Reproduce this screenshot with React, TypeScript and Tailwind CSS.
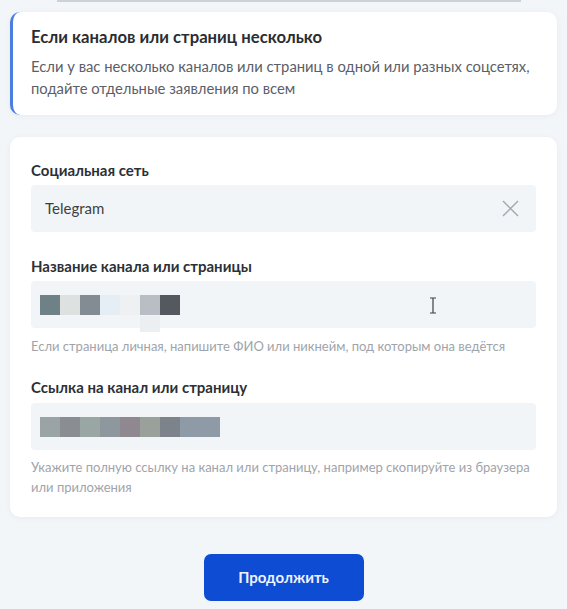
import React from "react";

const nameBlocks = ["#6e8187", "#dde2e0", "#838c93", "#e5eef5", "#eef0f1", "#b8bec4", "#54595f"];
const linkBlocks = ["#9aa4a5", "#8a8e93", "#9aa6a4", "#8e969e", "#8f8890", "#9aa19b", "#7d838b", "#8e9aa6", "#8e9aa6"];

const Label: React.FC<{ children: React.ReactNode }> = ({ children }) => (
  <p className="text-[15px] leading-[20px] font-bold text-[#2c3036]">{children}</p>
);

const Hint: React.FC<{ children: React.ReactNode }> = ({ children }) => (
  <p className="text-[13px] leading-[20px] text-[#a0a4aa]">{children}</p>
);

const App: React.FC = () => {
  return (
    <div className="min-h-[609px] bg-[#f3f6f9] px-[10px] font-['Lato','Noto_Sans',sans-serif]">
      <div className="ml-[47px] h-[2px] w-[464px] bg-[#cdd2d8]" />

      <section className="mt-[10px] rounded-[10px] border-l-[3px] border-[#4a7ee0] bg-white pt-[14px] pr-[18px] pb-[16px] pl-[18px] shadow-[0_1px_6px_rgba(30,60,110,0.06)]">
        <h2 className="text-[16.7px] leading-[22px] font-bold text-[#2a2d32]">
          Если каналов или страниц несколько
        </h2>
        <p className="mt-[7px] text-[14.8px] leading-[22px] text-[#5b6068]">
          Если у вас несколько каналов или страниц в одной или разных соцсетях,
          подайте отдельные заявления по всем
        </p>
      </section>

      <section className="mt-[22px] rounded-[10px] bg-white px-[21px] pt-[23px] pb-[20px] shadow-[0_1px_6px_rgba(30,60,110,0.06)]">
        <Label>Социальная сеть</Label>
        <div className="mt-[5px] flex h-[47px] items-center justify-between rounded-[4px] bg-[#f2f5f7] pr-[17px] pl-[14px]">
          <span className="text-[15px] text-[#3b3f45]">Telegram</span>
          <svg width="17" height="17" viewBox="0 0 17 17" fill="none" stroke="#a3a9b0" strokeWidth="1.4">
            <line x1="1" y1="1" x2="16" y2="16" />
            <line x1="16" y1="1" x2="1" y2="16" />
          </svg>
        </div>

        <div className="mt-[24px]">
          <Label>Название канала или страницы</Label>
        </div>
        <div className="relative mt-[5px] flex h-[47px] items-center rounded-[4px] bg-[#f2f5f7] pl-[9px]">
          <div className="flex">
            {nameBlocks.map((c, i) => (
              <div key={`n_${i}`} className="h-[20px] w-[20px]" style={{ backgroundColor: c }} />
            ))}
          </div>
          <div className="absolute top-[35px] left-[109px] h-[16px] w-[20px] bg-[#eceff1]" />
          <svg className="absolute top-[16px] left-[398px]" width="8" height="17" viewBox="0 0 8 17" fill="none" stroke="#3d4045" strokeWidth="1.2">
            <path d="M1 1h6M4 1v15M1 16h6" />
          </svg>
        </div>
        <div className="mt-[8px]">
          <Hint>Если страница личная, напишите ФИО или никнейм, под которым она ведётся</Hint>
        </div>

        <div className="mt-[21px]">
          <Label>Ссылка на канал или страницу</Label>
        </div>
        <div className="mt-[6px] flex h-[47px] items-center rounded-[4px] bg-[#f2f5f7] pl-[9px]">
          <div className="flex">
            {linkBlocks.map((c, i) => (
              <div key={`l_${i}`} className="h-[20px] w-[20px]" style={{ backgroundColor: c }} />
            ))}
          </div>
        </div>
        <div className="mt-[7px]">
          <Hint>
            Укажите полную ссылку на канал или страницу, например скопируйте из браузера
            или приложения
          </Hint>
        </div>
      </section>

      <div className="flex justify-center pt-[37px] pb-[8px]">
        <button className="h-[47px] w-[160px] rounded-[7px] bg-[#0d4cd3] text-[15px] font-bold text-[#eef3ff]">
          Продолжить
        </button>
      </div>
    </div>
  );
};

export default App;
